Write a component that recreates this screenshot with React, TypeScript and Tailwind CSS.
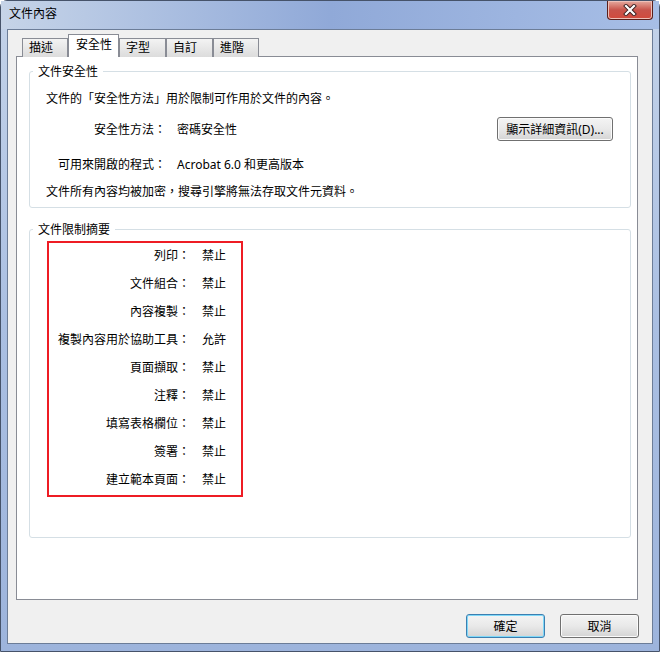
const rows: [string, string][] = [
  ['列印：', '禁止'],
  ['文件組合：', '禁止'],
  ['內容複製：', '禁止'],
  ['複製內容用於協助工具：', '允許'],
  ['頁面擷取：', '禁止'],
  ['注釋：', '禁止'],
  ['填寫表格欄位：', '禁止'],
  ['簽署：', '禁止'],
  ['建立範本頁面：', '禁止'],
];

const tabs = [
  { label: '描述', w: 'w-[46px]' },
  { label: '安全性', w: 'w-[51px]', active: true },
  { label: '字型', w: 'w-[47px]' },
  { label: '自訂', w: 'w-[47px]' },
  { label: '進階', w: 'w-[46px]' },
];

function WinButton({ children, primary, className = '' }: { children: React.ReactNode; primary?: boolean; className?: string }) {
  return (
    <div
      className={`flex h-[24px] items-center justify-center rounded-[3px] border bg-gradient-to-b from-[#f4f4f4] via-[#e9e9e9] to-[#d4d4d4] pt-[1px] ${
        primary
          ? 'border-[#3c7fb1] shadow-[inset_0_0_0_1px_#7fd8f8]'
          : 'border-[#707070] shadow-[inset_0_0_0_1px_#fbfbfb]'
      } ${className}`}
    >
      {children}
    </div>
  );
}

export default function App() {
  return (
    <div
      className="h-[652px] w-[660px] bg-white text-[12px] leading-[16px] text-black"
      style={{ fontFamily: '"Noto Sans", "Noto Sans CJK TC", sans-serif' }}
    >
      <div className="flex h-full flex-col rounded-t-[7px] border border-[#46536a] bg-gradient-to-b from-[#c4d3e9] via-[#aabfe2] to-[#9db4dc]">
        {/* Title bar */}
        <div className="flex h-[28px] items-start justify-between bg-gradient-to-r from-[#c6d4e8] via-[#90a9d8] to-[#a7bee6]">
          <div className="pl-[8px] pt-[5px] text-[12px]">文件內容</div>
          <div className="mr-[6px] flex h-[19px] w-[46px] items-center justify-center rounded-b-[4px] border border-t-0 border-[#5a1f1a] bg-gradient-to-b from-[#e4a99f] via-[#c8534a] to-[#d24a3c] shadow-[inset_0_0_0_1px_#eec0b8]">
            <svg width="14" height="12" viewBox="0 0 14 12">
              <path d="M3 2 L11 10 M11 2 L3 10" stroke="#3a2020" strokeWidth="4" strokeLinecap="square" />
              <path d="M3 2 L11 10 M11 2 L3 10" stroke="#ffffff" strokeWidth="2.2" strokeLinecap="square" />
            </svg>
          </div>
        </div>

        {/* Client area */}
        <div className="mx-[6px] mb-[7px] flex flex-1 flex-col border border-[#6c7d98] bg-[#f0f0f0]">
          {/* Tabs */}
          <div className="relative z-10 -mb-px ml-[14px] mt-[4px] flex h-[23px] items-end">
            {tabs.map((t) =>
              t.active ? (
                <div key={t.label} className={`${t.w} h-[23px] border border-b-0 border-[#898c95] bg-white pl-[7px] pt-[2px]`}>
                  {t.label}
                </div>
              ) : (
                <div
                  key={t.label}
                  className={`${t.w} h-[19px] border border-b-0 border-[#898c95] bg-gradient-to-b from-[#f3f3f3] to-[#dcdcdc] pl-[6px] pt-[1px]`}
                >
                  {t.label}
                </div>
              )
            )}
          </div>

          {/* Panel */}
          <div className="ml-[8px] h-[544px] w-[622px] border border-[#898c95] bg-white">
            <fieldset className="ml-[12px] mt-[6px] w-[602px] rounded-[3px] border border-[#d5dfe5] px-0 pb-[7px]">
              <legend className="ml-[3px] px-[5px] pt-[1px]">文件安全性</legend>
              <div className="mt-[11px] pl-[16px]">文件的「安全性方法」用於限制可作用於文件的內容。</div>
              <div className="mt-[10px] flex h-[24px] items-start">
                <div className="w-[136px] pt-[5px] text-right">安全性方法：</div>
                <div className="ml-[11px] pt-[5px]">密碼安全性</div>
                <WinButton className="ml-auto mr-[17px] w-[116px]">顯示詳細資訊(D)...</WinButton>
              </div>
              <div className="mt-[16px] flex">
                <div className="w-[136px] text-right">可用來開啟的程式：</div>
                <div className="ml-[11px]">Acrobat 6.0 和更高版本</div>
              </div>
              <div className="mt-[11px] pl-[16px]">文件所有內容均被加密，搜尋引擎將無法存取文件元資料。</div>
            </fieldset>

            <fieldset className="ml-[12px] mt-[13px] w-[602px] rounded-[3px] border border-[#d5dfe5] px-0 pb-[40px]">
              <legend className="ml-[3px] px-[5px] pt-[1px]">文件限制摘要</legend>
              <div className="ml-[17px] mt-[3px] flex h-[256px] w-[196px] flex-col gap-[12px] border-2 border-[#ee1c24] pt-[5px]">
                {rows.map(([label, value]) => (
                  <div key={label} className="flex">
                    <div className="w-[141px] text-right">{label}</div>
                    <div className="ml-[12px]">{value}</div>
                  </div>
                ))}
              </div>
            </fieldset>
          </div>

          {/* Dialog buttons */}
          <div className="mr-[13px] mt-[14px] flex justify-end gap-[15px]">
            <WinButton primary className="w-[79px]">確定</WinButton>
            <WinButton className="w-[79px]">取消</WinButton>
          </div>
        </div>
      </div>
    </div>
  );
}
